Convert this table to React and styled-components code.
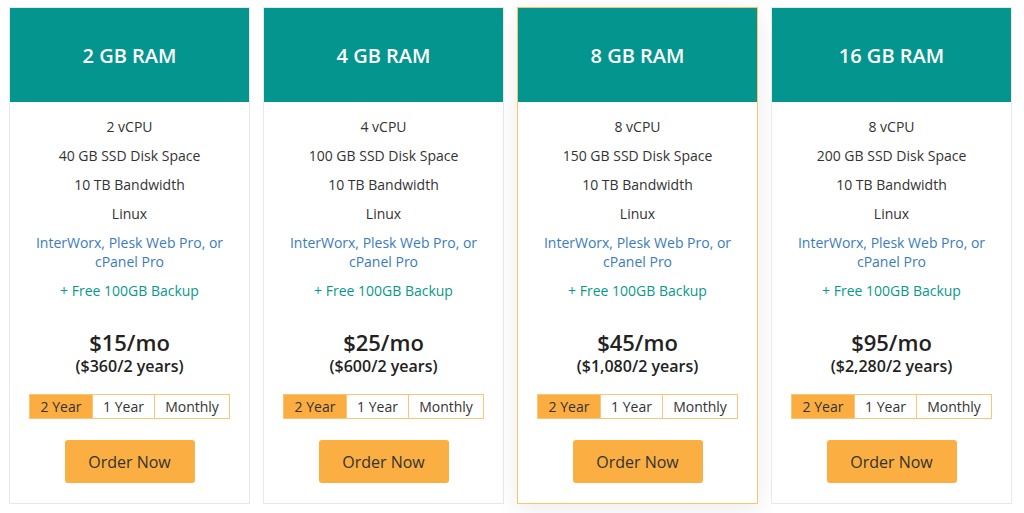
import { useState } from 'react'
import styled, { createGlobalStyle } from 'styled-components'

const GlobalStyle = createGlobalStyle`
  * {
    box-sizing: border-box;
  }
  body {
    margin: 0;
    background: #fff;
    font-family: "Open Sans", "Noto Sans", sans-serif;
    color: #333;
  }
`

const plans = [
  {
    ram: '2 GB RAM',
    cpu: '2 vCPU',
    disk: '40 GB SSD Disk Space',
    price: '$15/mo',
    total: '($360/2 years)',
  },
  {
    ram: '4 GB RAM',
    cpu: '4 vCPU',
    disk: '100 GB SSD Disk Space',
    price: '$25/mo',
    total: '($600/2 years)',
  },
  {
    ram: '8 GB RAM',
    cpu: '8 vCPU',
    disk: '150 GB SSD Disk Space',
    price: '$45/mo',
    total: '($1,080/2 years)',
    featured: true,
  },
  {
    ram: '16 GB RAM',
    cpu: '8 vCPU',
    disk: '200 GB SSD Disk Space',
    price: '$95/mo',
    total: '($2,280/2 years)',
  },
]

const terms = ['2 Year', '1 Year', 'Monthly']

const Plan = ({ plan }) => {
  const [term, setTerm] = useState('2 Year')
  const Wrapper = plan.featured ? FeaturedCard : Card

  return (
    <Wrapper>
      <Header>{plan.ram}</Header>
      <Body>
        <Features>
          <Feature>{plan.cpu}</Feature>
          <Feature>{plan.disk}</Feature>
          <Feature>10 TB Bandwidth</Feature>
          <Feature>Linux</Feature>
          <Feature $tone="link">InterWorx, Plesk Web Pro, or cPanel Pro</Feature>
          <Feature $tone="accent">+ Free 100GB Backup</Feature>
        </Features>
        <Price>{plan.price}</Price>
        <Total>{plan.total}</Total>
        <Toggle>
          {terms.map((t) => (
            <TermButton
              key={t}
              $active={t === term}
              $wide={t === 'Monthly'}
              onClick={() => setTerm(t)}
            >
              {t}
            </TermButton>
          ))}
        </Toggle>
        <OrderButton>Order Now</OrderButton>
      </Body>
    </Wrapper>
  )
}

const App = () => (
  <>
    <GlobalStyle />
    <Grid>
      {plans.map((p) => (
        <Plan key={p.ram} plan={p} />
      ))}
    </Grid>
  </>
)

export default App

const Grid = styled.div`
  display: grid;
  grid-template-columns: repeat(4, 241px);
  gap: 13px;
  padding: 7px 12px 10px 9px;
`

const Card = styled.div`
  display: flex;
  flex-direction: column;
  height: 497px;
  background: #fff;
  border: 1px solid #e8e8e8;
`

const FeaturedCard = styled(Card)`
  border-color: #fbc46f;
  box-shadow: 0 6px 24px rgba(0, 0, 0, 0.08);
`

const Header = styled.div`
  height: 95px;
  display: flex;
  align-items: center;
  justify-content: center;
  background: #04968e;
  color: #fff;
  font-size: 20px;
  font-weight: 600;
`

const Body = styled.div`
  display: flex;
  flex-direction: column;
  align-items: center;
  padding: 10px 18px 20px;
  text-align: center;
`

const Features = styled.ul`
  list-style: none;
  margin: 0;
  padding: 0;
  width: 100%;
`

const Feature = styled.li`
  padding: 5px 0;
  font-size: 14px;
  line-height: 19px;
  color: ${(p) =>
    p.$tone === 'link' ? '#3a7cbd' : p.$tone === 'accent' ? '#08988a' : '#333'};
`

const Price = styled.div`
  margin-top: 24px;
  font-size: 22px;
  line-height: 27px;
  font-weight: 600;
  color: #222;
`

const Total = styled.div`
  font-size: 16px;
  line-height: 20px;
  font-weight: 600;
  color: #222;
`

const Toggle = styled.div`
  display: flex;
  margin-top: 18px;
  border: 1px solid #fcc574;
`

const TermButton = styled.button`
  width: ${(p) => (p.$wide ? '75px' : '62px')};
  height: 23px;
  padding: 0;
  border: none;
  border-left: 1px solid #fcc574;
  background: ${(p) => (p.$active ? '#fbad41' : '#fff')};
  font-family: inherit;
  font-size: 14px;
  color: #333;
  cursor: pointer;

  &:first-child {
    border-left: none;
  }
`

const OrderButton = styled.button`
  margin-top: 21px;
  width: 130px;
  height: 43px;
  border: none;
  border-radius: 3px;
  background: #fbae42;
  font-family: inherit;
  font-size: 16px;
  color: #333;
  cursor: pointer;
`
